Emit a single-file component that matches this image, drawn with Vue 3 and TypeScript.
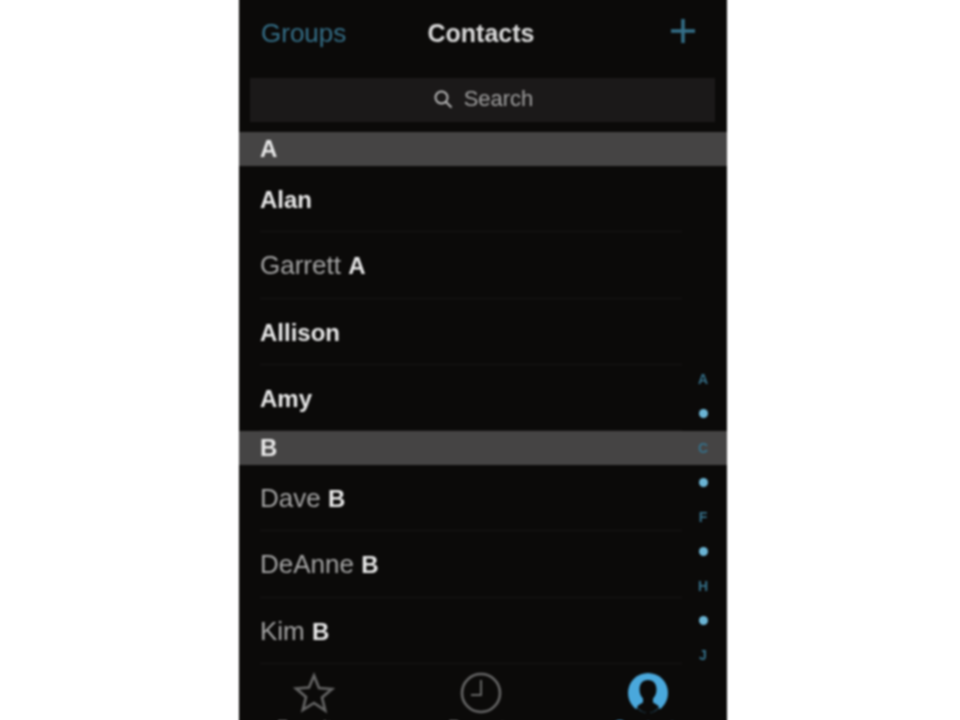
<script setup lang="ts">
interface Contact { first: string; last?: string; boldOnly?: boolean }
interface Section { letter: string; items: Contact[] }
const sections: Section[] = [
  { letter: 'A', items: [
    { first: 'Alan', boldOnly: true },
    { first: 'Garrett', last: 'A' },
    { first: 'Allison', boldOnly: true },
    { first: 'Amy', boldOnly: true },
  ] },
  { letter: 'B', items: [
    { first: 'Dave', last: 'B' },
    { first: 'DeAnne', last: 'B' },
    { first: 'Kim', last: 'B' },
  ] },
]
const index = ['A', '•', 'C', '•', 'F', '•', 'H', '•', 'J']
</script>

<template>
  <div class="page">
    <div class="phone">
      <header class="nav">
        <span class="groups">Groups</span>
        <span class="title">Contacts</span>
        <svg class="plus" width="26" height="26" viewBox="0 0 26 26" aria-hidden="true">
          <path d="M13 1v24M1 13h24" stroke="#356f88" stroke-width="3.500" fill="none" />
        </svg>
      </header>
      <div class="search">
        <svg width="22" height="22" viewBox="0 0 22 22" aria-hidden="true">
          <circle cx="9.500" cy="9.500" r="6" stroke="#b8b8b8" stroke-width="2" fill="none" />
          <path d="M14 14l5.500 5.500" stroke="#b8b8b8" stroke-width="2" fill="none" />
        </svg>
        <span>Search</span>
      </div>
      <section v-for="s in sections" :key="s.letter">
        <div class="letter">{{ s.letter }}</div>
        <div v-for="c in s.items" :key="c.first" class="row">
          <b v-if="c.boldOnly">{{ c.first }}</b>
          <template v-else><span class="first">{{ c.first }}</span> <b>{{ c.last }}</b></template>
        </div>
      </section>
      <nav class="tabs">
        <div class="tab">
          <svg width="42" height="42" viewBox="0 0 42 42" aria-hidden="true">
            <path d="M21 3.500l5 12.500 13 1-10 8.500 3.200 13L21 31l-11.200 7 3.200-13-10-8.500 13-1z" stroke="#666" stroke-width="2.600" fill="none" />
          </svg>
          <span>Favorites</span>
        </div>
        <div class="tab">
          <svg width="42" height="42" viewBox="0 0 42 42" aria-hidden="true">
            <circle cx="21" cy="21" r="19" stroke="#666" stroke-width="2.600" fill="none" />
            <path d="M21 8v15H11" stroke="#666" stroke-width="2" fill="none" />
          </svg>
          <span>Recents</span>
        </div>
        <div class="tab active">
          <svg width="42" height="42" viewBox="0 0 42 42" aria-hidden="true">
            <circle cx="21" cy="21" r="20" fill="#4aa8dc" />
            <path d="M21 8c-5.500 0-8.500 4-8.500 9.500 0 4 1.500 7 3.500 9v4c-2 1-4 2.500-6 4 2.500 4 6.500 6.500 11 6.500s8.500-2.500 11-6.500c-2-1.500-4-3-6-4v-4c2-2 3.500-5 3.500-9 0-5.500-3-9.500-8.500-9.500z" fill="#0b0a09" />
            <path d="M10 35.500C13 39 17 41.500 21 41.500s8-2.500 11-6l2 6H8z" fill="#0b0a09" />
          </svg>
          <span>Contacts</span>
        </div>
      </nav>
      <div class="index">
        <span v-for="(x, i) in index" :key="i" :class="{ dot: x === '•' }">{{ x === '•' ? '' : x }}</span>
      </div>
    </div>
  </div>
</template>

<style scoped>
.page {
  width: 960px;
  height: 720px;
  overflow: hidden;
  background: #fff;
  display: flex;
  justify-content: center;
  padding-left: 6px;
  box-sizing: border-box;
}
.phone {
  position: relative;
  width: 488px;
  height: 728px;
  margin-top: -4px;
  padding-top: 4px;
  box-sizing: border-box;
  flex: none;
  overflow: hidden;
  background: #0b0a09;
  font-family: "Liberation Sans", Arial, sans-serif;
  filter: blur(1.100px);
}
.nav {
  height: 66px;
  padding: 0 31px 0 22px;
  display: grid;
  grid-template-columns: 1fr auto 1fr;
  align-items: center;
}
.groups {
  font-size: 26px;
  color: #356f88;
}
.title {
  font-size: 25px;
  font-weight: 700;
  color: #dadada;
  margin-left: 5px;
}
.plus {
  justify-self: end;
  margin-top: -4px;
}
.search {
  height: 44px;
  margin: 12px 12px 10px 11px;
  padding-bottom: 2px;
  box-sizing: border-box;
  background: #1b1919;
  display: flex;
  align-items: center;
  justify-content: center;
  gap: 10px;
  font-size: 22px;
  color: #a0a0a0;
}
.letter {
  height: 34px;
  line-height: 34px;
  padding-left: 21px;
  background: #454444;
  color: #e8e8e8;
  font-size: 24px;
  font-weight: 700;
}
.row {
  height: 66.300px;
  line-height: 66px;
  padding-left: 21px;
  box-sizing: border-box;
  font-size: 26px;
  color: #e8e8e8;
  position: relative;
}
.row b {
  font-size: 24px;
}
.row::after {
  content: "";
  position: absolute;
  left: 21px;
  right: 45px;
  bottom: 0;
  height: 1px;
  background: #171515;
}
.row .first {
  color: #a4a4a4;
}
.tabs {
  width: 502px;
  height: 60px;
  margin-left: -9px;
  display: flex;
  padding-top: 8px;
  box-sizing: border-box;
}
.tab {
  flex: 1;
  display: flex;
  flex-direction: column;
  align-items: center;
  gap: 4px;
  font-size: 18px;
  line-height: 1;
  color: #777;
}
.tab svg {
  flex: none;
}
.tab.active {
  color: #4aa8dc;
}
.index {
  position: absolute;
  right: 12px;
  top: 366px;
  width: 24px;
  display: grid;
  grid-auto-rows: 34.500px;
  justify-items: center;
  align-items: center;
  font-size: 14px;
  font-weight: 700;
  color: #356f88;
}
.dot {
  width: 9px;
  height: 9px;
  border-radius: 50%;
  background: #6bb5d5;
}
</style>
